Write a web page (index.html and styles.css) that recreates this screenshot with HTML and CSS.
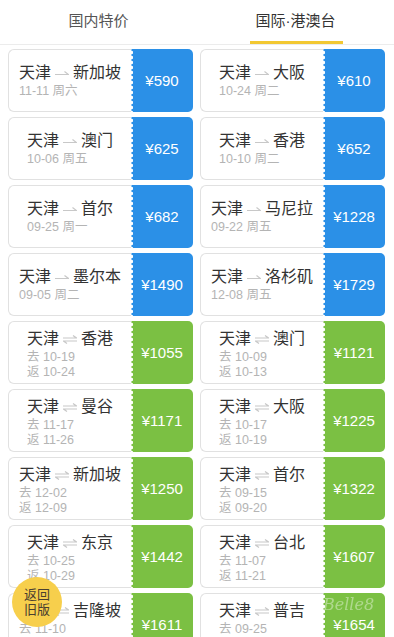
FILE: index.html
```html
<!DOCTYPE html>
<html lang="zh-CN">
<head>
<meta charset="utf-8">
<title>特价机票</title>
<link rel="stylesheet" href="styles.css">
</head>
<body>
<div class="tabs">
  <div class="tab">国内特价</div>
  <div class="tab active">国际·港澳台</div>
</div>

<svg width="0" height="0" class="defs">
  <defs>
    <symbol id="ow" viewBox="0 0 14 10"><path d="M0 6.5H13.5L9.5 3.5" fill="none" stroke="#c8c8c8" stroke-width="1.2"/></symbol>
    <symbol id="rt" viewBox="0 0 14 10"><path d="M0 4H13.5L10 1.5M14 7H0.5L4 9.5" fill="none" stroke="#c8c8c8" stroke-width="1.2"/></symbol>
  </defs>
</svg>

<div class="list">
  <div class="card"><div class="info"><div class="inner"><div class="title">天津<svg class="arr"><use href="#ow"/></svg>新加坡</div><div class="date">11-11 周六</div></div></div><div class="price blue">¥590</div></div>
  <div class="card"><div class="info"><div class="inner"><div class="title">天津<svg class="arr"><use href="#ow"/></svg>大阪</div><div class="date">10-24 周二</div></div></div><div class="price blue">¥610</div></div>

  <div class="card"><div class="info"><div class="inner"><div class="title">天津<svg class="arr"><use href="#ow"/></svg>澳门</div><div class="date">10-06 周五</div></div></div><div class="price blue">¥625</div></div>
  <div class="card"><div class="info"><div class="inner"><div class="title">天津<svg class="arr"><use href="#ow"/></svg>香港</div><div class="date">10-10 周二</div></div></div><div class="price blue">¥652</div></div>

  <div class="card"><div class="info"><div class="inner"><div class="title">天津<svg class="arr"><use href="#ow"/></svg>首尔</div><div class="date">09-25 周一</div></div></div><div class="price blue">¥682</div></div>
  <div class="card"><div class="info"><div class="inner"><div class="title">天津<svg class="arr"><use href="#ow"/></svg>马尼拉</div><div class="date">09-22 周五</div></div></div><div class="price blue">¥1228</div></div>

  <div class="card"><div class="info"><div class="inner"><div class="title">天津<svg class="arr"><use href="#ow"/></svg>墨尔本</div><div class="date">09-05 周二</div></div></div><div class="price blue">¥1490</div></div>
  <div class="card"><div class="info"><div class="inner"><div class="title">天津<svg class="arr"><use href="#ow"/></svg>洛杉矶</div><div class="date">12-08 周五</div></div></div><div class="price blue">¥1729</div></div>

  <div class="card"><div class="info"><div class="inner rt"><div class="title">天津<svg class="arr"><use href="#rt"/></svg>香港</div><div class="date">去 10-19</div><div class="date">返 10-24</div></div></div><div class="price green">¥1055</div></div>
  <div class="card"><div class="info"><div class="inner rt"><div class="title">天津<svg class="arr"><use href="#rt"/></svg>澳门</div><div class="date">去 10-09</div><div class="date">返 10-13</div></div></div><div class="price green">¥1121</div></div>

  <div class="card"><div class="info"><div class="inner rt"><div class="title">天津<svg class="arr"><use href="#rt"/></svg>曼谷</div><div class="date">去 11-17</div><div class="date">返 11-26</div></div></div><div class="price green">¥1171</div></div>
  <div class="card"><div class="info"><div class="inner rt"><div class="title">天津<svg class="arr"><use href="#rt"/></svg>大阪</div><div class="date">去 10-17</div><div class="date">返 10-19</div></div></div><div class="price green">¥1225</div></div>

  <div class="card"><div class="info"><div class="inner rt"><div class="title">天津<svg class="arr"><use href="#rt"/></svg>新加坡</div><div class="date">去 12-02</div><div class="date">返 12-09</div></div></div><div class="price green">¥1250</div></div>
  <div class="card"><div class="info"><div class="inner rt"><div class="title">天津<svg class="arr"><use href="#rt"/></svg>首尔</div><div class="date">去 09-15</div><div class="date">返 09-20</div></div></div><div class="price green">¥1322</div></div>

  <div class="card"><div class="info"><div class="inner rt"><div class="title">天津<svg class="arr"><use href="#rt"/></svg>东京</div><div class="date">去 10-25</div><div class="date">返 10-29</div></div></div><div class="price green">¥1442</div></div>
  <div class="card"><div class="info"><div class="inner rt"><div class="title">天津<svg class="arr"><use href="#rt"/></svg>台北</div><div class="date">去 11-07</div><div class="date">返 11-21</div></div></div><div class="price green">¥1607</div></div>

  <div class="card"><div class="info"><div class="inner rt"><div class="title">天津<svg class="arr"><use href="#rt"/></svg>吉隆坡</div><div class="date">去 11-10</div><div class="date">返 11-15</div></div></div><div class="price green">¥1611</div></div>
  <div class="card"><div class="info"><div class="inner rt"><div class="title">天津<svg class="arr"><use href="#rt"/></svg>普吉</div><div class="date">去 09-25</div><div class="date">返 09-30</div></div></div><div class="price green">¥1654</div></div>
</div>

<div class="old-btn">返回<br>旧版</div>
<div class="watermark">Belle8</div>
</body>
</html>
```

FILE: styles.css
```css
* { box-sizing: border-box; }
html, body {
  margin: 0;
  padding: 0;
  background: #fff;
  font-family: "Liberation Sans", "Noto Sans CJK SC", sans-serif;
  color: #333;
}
.defs { position: absolute; width: 0; height: 0; }
.tabs {
  display: flex;
  height: 45px;
  border-bottom: 1px solid #ececec;
}
.tab {
  flex: 1;
  display: flex;
  align-items: center;
  justify-content: center;
  padding-bottom: 5px;
  font-size: 15px;
  color: #555;
  position: relative;
}
.tab.active { color: #333; }
.tab.active::after {
  content: "";
  position: absolute;
  left: 50%;
  bottom: 0;
  width: 93px;
  margin-left: -46px;
  height: 3px;
  background: #f2c832;
}
.list {
  display: grid;
  grid-template-columns: 185px 185px;
  column-gap: 7px;
  row-gap: 5px;
  padding: 4px 0 0 8px;
}
.card {
  display: flex;
  height: 63px;
}
.info {
  flex: 1;
  display: flex;
  align-items: center;
  justify-content: center;
  border: 1px solid #e1e1e1;
  border-right: none;
  border-radius: 6px 0 0 6px;
  background: #fff;
}
.inner.rt { padding-top: 4px; }
.title {
  font-size: 16px;
  line-height: 20px;
  color: #333;
  white-space: nowrap;
  display: flex;
  align-items: center;
}
.arr {
  width: 14px;
  height: 10px;
  margin: 0 4px 0 4px;
}
.date {
  font-size: 12.5px;
  line-height: 15px;
  color: #b4b4b4;
  white-space: nowrap;
}
.inner > .title + .date { margin-top: 1px; }
.price {
  width: 62px;
  display: flex;
  align-items: center;
  justify-content: center;
  color: #fff;
  font-size: 15px;
  border-radius: 0 5px 5px 0;
  position: relative;
}
.price::before {
  content: "";
  position: absolute;
  left: 0;
  top: 0;
  bottom: 0;
  width: 3px;
  background: radial-gradient(circle at 0 50%, #fff 1.7px, rgba(255,255,255,0) 2.4px) 0 1px / 3px 5px repeat-y;
}
.blue { background: #2b90e7; }
.green { background: #7bc043; }
.old-btn {
  position: fixed;
  left: 12px;
  top: 577px;
  width: 50px;
  height: 50px;
  border-radius: 50%;
  background: #f7cf4c;
  color: #4a4030;
  font-size: 13px;
  line-height: 15px;
  display: flex;
  align-items: center;
  justify-content: center;
  text-align: center;
}
.watermark {
  position: fixed;
  left: 323px;
  top: 595px;
  font-family: "DejaVu Serif", serif;
  font-style: italic;
  font-size: 16px;
  color: rgba(255,255,255,0.4);
}
```
